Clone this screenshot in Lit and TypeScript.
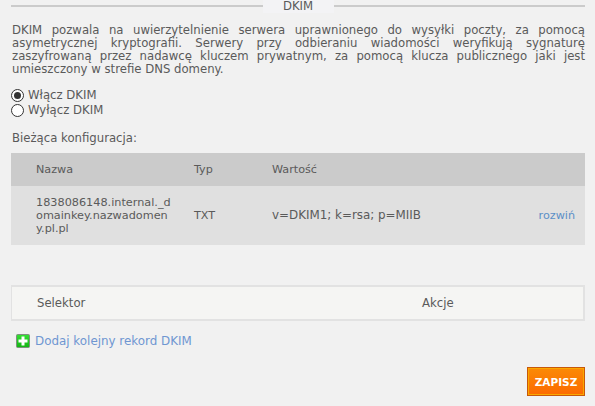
import { LitElement, html, css } from 'lit';
import { customElement } from 'lit/decorators.js';

const INTRO = [
  'DKIM pozwala na uwierzytelnienie serwera uprawnionego do wysyłki poczty, za pomocą',
  'asymetrycznej kryptografii. Serwery przy odbieraniu wiadomości weryfikują sygnaturę',
  'zaszyfrowaną przez nadawcę kluczem prywatnym, za pomocą klucza publicznego jaki jest',
];

@customElement('app-root')
export class AppRoot extends LitElement {
  static styles = css`
    :host {
      display: block;
      width: 595px;
      height: 406px;
      overflow: hidden;
      box-sizing: border-box;
      padding: 0 10px 0 11px;
      background: #f1f1f1;
      color: #5a5a5a;
      font-family: "DejaVu Sans", Verdana, sans-serif;
      font-size: 11.7px;
      line-height: 13px;
    }
    .title {
      display: flex;
      align-items: flex-start;
      height: 13px;
    }
    .title i {
      flex: 1;
      height: 2px;
      margin-top: 5px;
      background: #cbcbcb;
    }
    .title span {
      width: 71px;
      height: 13px;
      background: #f3f3f5;
      text-align: center;
    }
    .intro {
      margin-top: 11px;
      padding-left: 1px;
    }
    .intro div {
      text-align: justify;
      text-align-last: justify;
    }
    .intro div:last-child {
      text-align-last: left;
    }
    .radios {
      margin-top: 13px;
      display: flex;
      flex-direction: column;
      gap: 2px;
    }
    label {
      display: flex;
      align-items: center;
      height: 13px;
      gap: 4px;
    }
    .radio {
      width: 13px;
      height: 13px;
      box-sizing: border-box;
      border: 1px solid #333;
      border-radius: 50%;
      background: #fff;
      display: flex;
      align-items: center;
      justify-content: center;
    }
    .radio.on::after {
      content: '';
      width: 7px;
      height: 7px;
      border-radius: 50%;
      background: #333;
    }
    .current {
      margin-top: 15px;
      padding-left: 1px;
    }
    .grid {
      display: grid;
      grid-template-columns: 158px 78px 1fr auto;
      padding-left: 25px;
      padding-right: 10px;
      align-items: center;
      font-size: 11.2px;
    }
    .head {
      margin-top: 8px;
      height: 33px;
      background: #cbcbcb;
    }
    .row {
      height: 59px;
      background: #e0e0e0;
    }
    .name {
      width: 136px;
      font-size: 11.25px;
      word-break: break-all;
    }
    .value {
      font-size: 11.9px;
    }
    a {
      color: #5b8fc7;
      text-decoration: none;
    }
    .selectors {
      margin-top: 40px;
      height: 36px;
      box-sizing: border-box;
      border: 1px solid #e2e2e2;
      border-width: 2px 2px 2px 1px;
      background: #f5f5f3;
      display: grid;
      grid-template-columns: 385px 1fr;
      align-items: center;
      padding-left: 25px;
    }
    .add {
      margin-top: 13px;
      margin-left: 5px;
      display: flex;
      align-items: center;
      gap: 5px;
      height: 14px;
      font-size: 11.9px;
    }
    .add a {
      color: #6f96d1;
    }
    .actions {
      margin-top: 19px;
      display: flex;
      justify-content: flex-end;
    }
    button {
      width: 58px;
      height: 29px;
      padding: 0;
      border: 1px solid #c8570a;
      box-shadow: inset 0 0 0 1px #f9a800;
      background: linear-gradient(#fb8a06, #fc6a00);
      color: #fff;
      font: bold 10.5px "DejaVu Sans", Verdana, sans-serif;
    }
  `;

  render() {
    return html`
      <div class="title"><i></i><span>DKIM</span><i></i></div>
      <div class="intro">
        ${INTRO.map((line) => html`<div>${line}</div>`)}
        <div>umieszczony w strefie DNS domeny.</div>
      </div>
      <div class="radios">
        <label><span class="radio on"></span>Włącz DKIM</label>
        <label><span class="radio"></span>Wyłącz DKIM</label>
      </div>
      <div class="current">Bieżąca konfiguracja:</div>
      <div class="grid head">
        <span>Nazwa</span><span>Typ</span><span>Wartość</span><span></span>
      </div>
      <div class="grid row">
        <span class="name">1838086148.internal._domainkey.nazwadomeny.pl.pl</span>
        <span>TXT</span>
        <span class="value">v=DKIM1; k=rsa; p=MIIB</span>
        <a href="#">rozwiń</a>
      </div>
      <div class="selectors"><span>Selektor</span><span>Akcje</span></div>
      <div class="add">
        <svg width="14" height="14" viewBox="0 0 14 14">
          <defs>
            <linearGradient id="g" x1="0" y1="0" x2="0" y2="1">
              <stop offset="0" stop-color="#35e035" />
              <stop offset="1" stop-color="#14b414" />
            </linearGradient>
          </defs>
          <rect x="0.5" y="0.5" width="13" height="13" rx="1" fill="url(#g)" stroke="#7f8f7f" />
          <path d="M5.5 2.5h3v3h3v3h-3v3h-3v-3h-3v-3h3z" fill="#fff" />
        </svg>
        <a href="#">Dodaj kolejny rekord DKIM</a>
      </div>
      <div class="actions"><button>ZAPISZ</button></div>
    `;
  }
}
